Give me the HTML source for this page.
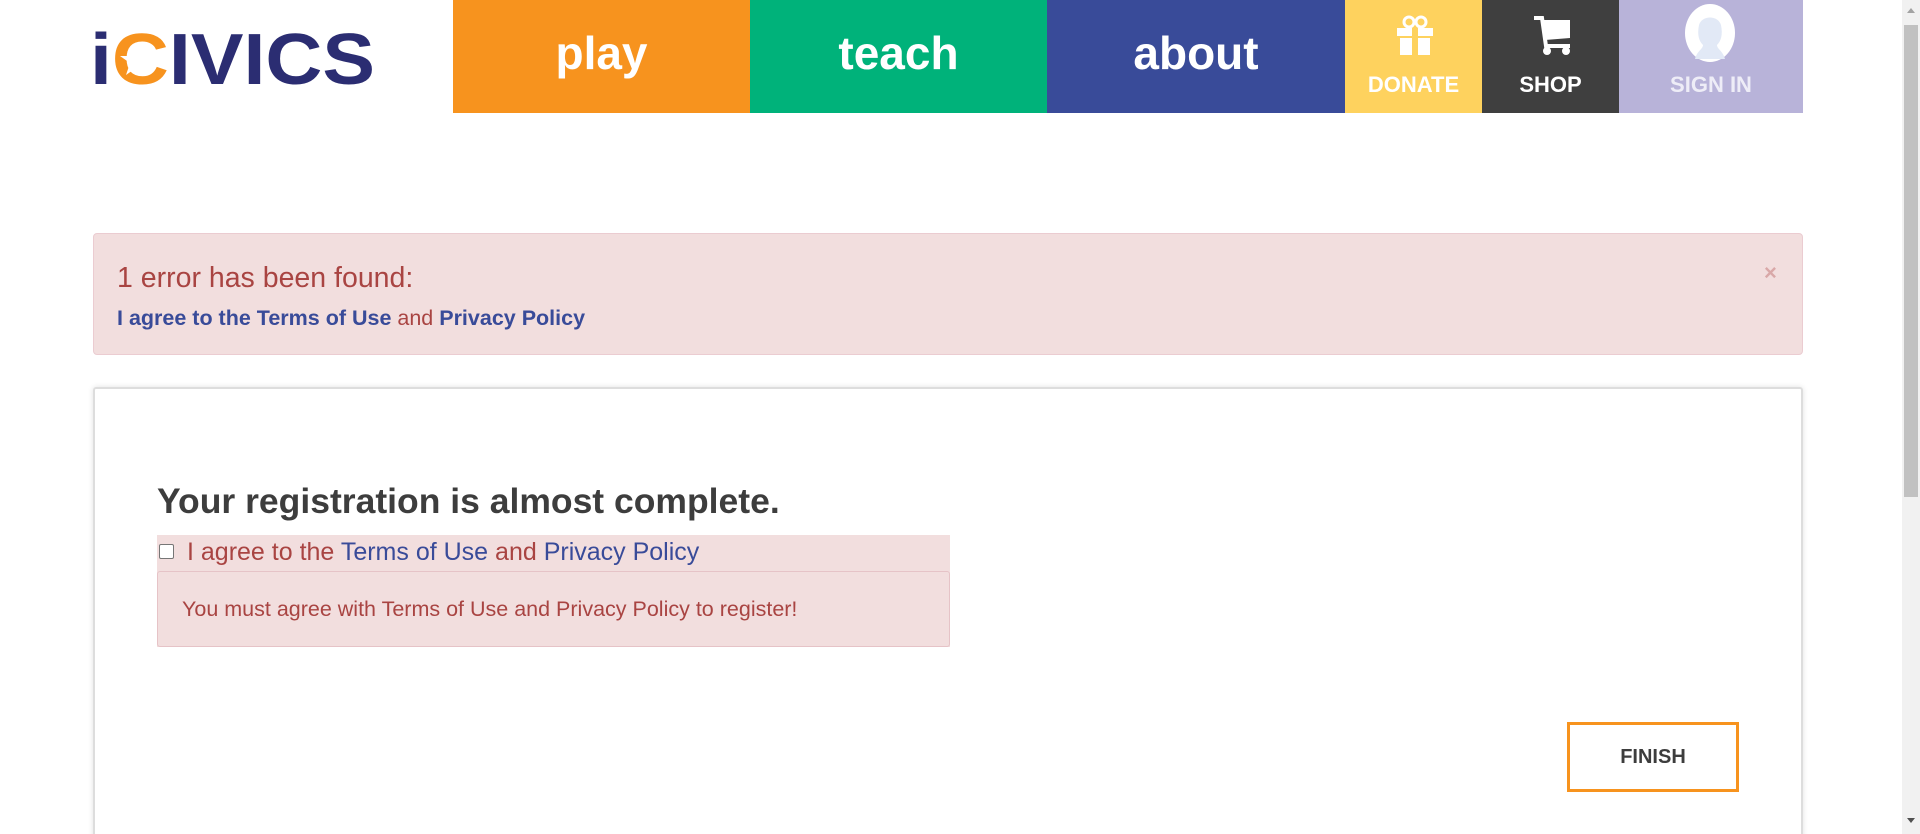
<!DOCTYPE html>
<html style="overflow:hidden;height:834px"><head><meta charset="utf-8"><style>
*{margin:0;padding:0;box-sizing:border-box}
body{width:1920px;height:834px;overflow:hidden;background:#fff;font-family:"Liberation Sans",sans-serif;position:relative}
.nav{position:absolute;top:0;height:113px;color:#fff;font-weight:bold;text-align:center}
.big{font-size:46px;line-height:106px}
.small{font-size:22px;position:absolute;left:0;right:0;top:72px}
.abs{position:absolute}
</style></head><body>
<svg class="abs" style="left:90px;top:20px" width="290" height="72">
<text x="0" y="64" font-family="Liberation Sans" font-weight="bold" font-size="72" fill="#2b2d72" textLength="285" lengthAdjust="spacingAndGlyphs">i<tspan fill="#f7931e">C</tspan>IVICS</text>
<polygon points="46,24 50,36 62,36 52,43 56,55 46,48 36,55 40,43 30,36 42,36" fill="#fff"/>
</svg>
<div class="nav" style="left:453px;width:297px;background:#f7931e"><div class="big">play</div></div>
<div class="nav" style="left:750px;width:297px;background:#00b27a"><div class="big">teach</div></div>
<div class="nav" style="left:1047px;width:298px;background:#394b99"><div class="big">about</div></div>
<div class="nav" style="left:1345px;width:137px;background:#fed25e">
<svg class="abs" style="left:50px;top:14px" width="40" height="42"><rect x="2" y="14" width="36" height="8" fill="#fff"/><rect x="5" y="24" width="30" height="17" fill="#fff"/><rect x="17" y="14" width="6" height="27" fill="#fed25e"/><circle cx="14" cy="8" r="5" fill="none" stroke="#fff" stroke-width="3"/><circle cx="26" cy="8" r="5" fill="none" stroke="#fff" stroke-width="3"/></svg>
<div class="small">DONATE</div></div>
<div class="nav" style="left:1482px;width:137px;background:#3f3f3f">
<svg class="abs" style="left:50px;top:14px" width="40" height="42"><path d="M2 4h8l4 28h24" stroke="#fff" stroke-width="4" fill="none"/><path d="M10 6h28v18l-25 2z" fill="#fff"/><circle cx="15" cy="37" r="4" fill="#fff"/><circle cx="34" cy="37" r="4" fill="#fff"/></svg>
<div class="small">SHOP</div></div>
<div class="nav" style="left:1619px;width:184px;background:#b8b3d9">
<svg class="abs" style="left:60px;top:3px" width="62" height="62"><ellipse cx="31" cy="30" rx="25" ry="29" fill="#fff"/><path d="M16 56c2-8 8-10 8-14-4-4-6-10-4-20 3-10 19-10 22 0 2 10 0 16-4 20 0 4 6 6 8 14z" fill="#e2e9f6"/></svg>
<div class="small" style="color:#eeedf7">SIGN IN</div></div>

<div class="abs" style="left:1902px;top:0;width:18px;height:834px;background:#f1f1f1">
<div class="abs" style="left:2px;top:25px;width:14px;height:472px;background:#c1c1c1"></div>
<div class="abs" style="left:5px;top:8px;border:4px solid transparent;border-bottom:5px solid #a3a3a3;border-top:0"></div>
<div class="abs" style="left:5px;top:818px;border:4px solid transparent;border-top:5px solid #505050;border-bottom:0"></div>
</div>

<div class="abs" style="left:93px;top:233px;width:1710px;height:122px;background:#f2dede;border:1px solid #ebccd1;border-radius:4px">
<div class="abs" style="left:23px;top:28px;font-size:28.5px;color:#a94442">1 error has been found:</div>
<div class="abs" style="left:23px;top:72px;font-size:21.5px;font-weight:bold;color:#394b99">I agree to the Terms of Use <span style="font-weight:normal;color:#a94442">and</span> Privacy Policy</div>
<div class="abs" style="left:1670px;top:26px;font-size:22px;color:#d9a8a8;font-weight:bold">×</div>
</div>

<div class="abs" style="left:93px;top:387px;width:1710px;height:460px;border:2px solid #ddd;border-radius:3px;box-shadow:0 0 6px rgba(0,0,0,.12)">
<div class="abs" style="left:62px;top:92px;font-size:35.5px;font-weight:bold;color:#3d3d3d">Your registration is almost complete.</div>
<div class="abs" style="left:62px;top:146px;width:793px;height:112px;background:#f2dede">
<div class="abs" style="left:2px;top:9px;width:15px;height:15px;border:1px solid #767676;border-radius:2px;background:#fff"></div>
<div class="abs" style="left:30px;top:3px;font-size:25px;color:#a94442">I agree to the <span style="color:#394b99">Terms of Use</span> and <span style="color:#394b99">Privacy Policy</span></div>
<div class="abs" style="left:0;top:36px;width:793px;height:76px;border:1px solid #e6c3c7;border-radius:3px">
<div class="abs" style="left:24px;top:25px;font-size:21.5px;color:#a94442">You must agree with Terms of Use and Privacy Policy to register!</div>
</div></div>
<div class="abs" style="left:1472px;top:333px;width:172px;height:70px;border:3px solid #f7931e;text-align:center;line-height:64px;font-size:20px;font-weight:bold;color:#3d3d3d">FINISH</div>
</div>
</body></html>
